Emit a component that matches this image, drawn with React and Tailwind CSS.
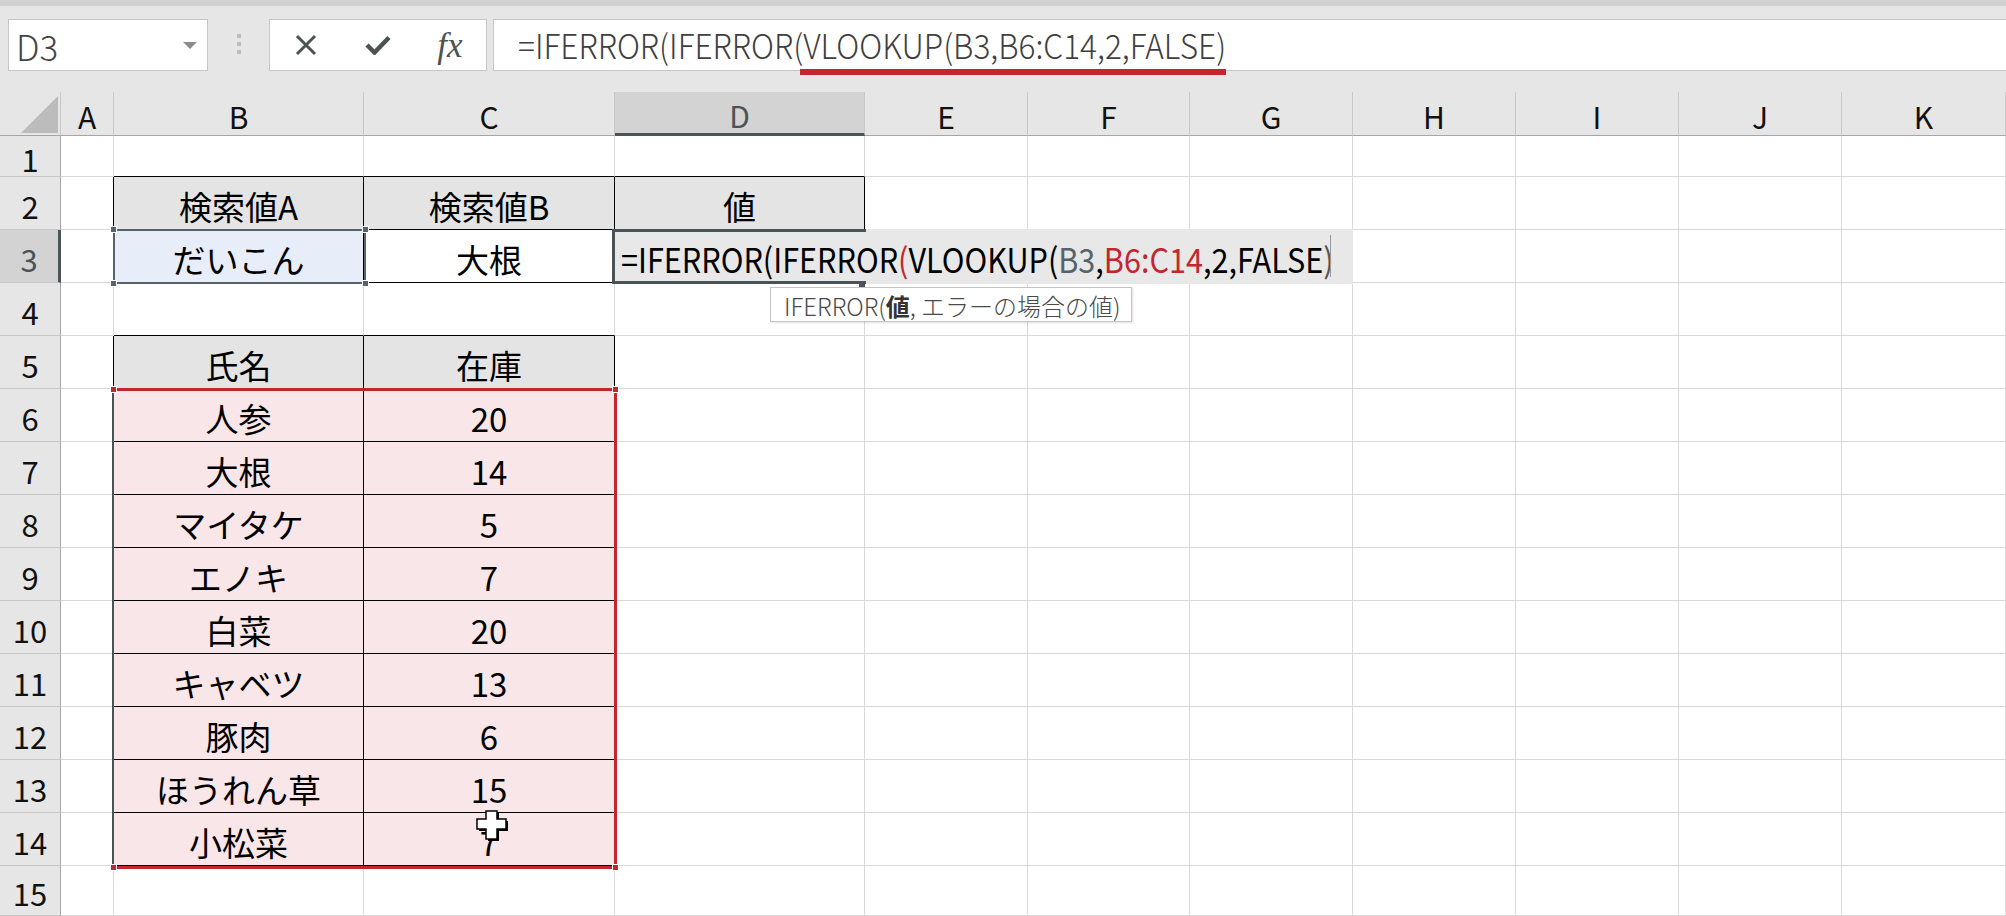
import React from "react";

const COLUMNS = ["A", "B", "C", "D", "E", "F", "G", "H", "I", "J", "K"];

// cell contents keyed by row, then column index (0 = A)
const CELLS = {
  2: { 1: "検索値A", 2: "検索値B", 3: "値" },
  3: { 1: "だいこん", 2: "大根" },
  5: { 1: "氏名", 2: "在庫" },
};
const STOCK = [
  ["人参", "20"],
  ["大根", "14"],
  ["マイタケ", "5"],
  ["エノキ", "7"],
  ["白菜", "20"],
  ["キャベツ", "13"],
  ["豚肉", "6"],
  ["ほうれん草", "15"],
  ["小松菜", "7"],
];
STOCK.forEach(([name, qty], i) => {
  CELLS[6 + i] = { 1: name, 2: qty };
});

const inStock = (r) => r >= 5 && r <= 14;

const rightBlack = (r, c) =>
  (c === 0 && (r === 2 || r === 3 || inStock(r))) ||
  (r === 2 && c >= 1 && c <= 3) ||
  (r === 3 && (c === 1 || c === 2)) ||
  (inStock(r) && (c === 1 || c === 2));

const bottomBlack = (r, c) =>
  ((r === 1 || r === 2) && c >= 1 && c <= 3) ||
  (r === 3 && (c === 1 || c === 2)) ||
  ((r === 4 || inStock(r)) && (c === 1 || c === 2));

const fill = (r, c) => {
  if ((r === 2 && c >= 1 && c <= 3) || (r === 5 && (c === 1 || c === 2))) return "bg-[#e4e4e4]";
  if (r === 3 && c === 1) return "bg-[#e8eef9]";
  if (r >= 6 && r <= 14 && (c === 1 || c === 2)) return "bg-[#f8e6e8]";
  return "bg-white";
};

const Handle = ({ className }) => (
  <div className={`absolute w-[7px] h-[7px] border border-white ${className}`} />
);

function FormulaBar() {
  return (
    <div className="h-[86px] bg-[#e6e6e6] flex items-start pt-[13px] pl-[8px]">
      <div className="w-[200px] h-[52px] bg-white border border-[#c6c6c6] flex items-center justify-between pl-[7px] pr-[10px]">
        <span className="text-[35px] font-light text-[#454545] leading-none">D3</span>
        <svg width="14" height="7" viewBox="0 0 14 7">
          <polygon points="0,0 14,0 7,7" fill="#8c8c8c" />
        </svg>
      </div>
      <div className="ml-[29px] mt-[15px] flex flex-col gap-[4px]">
        <div className="w-[4px] h-[4px] bg-[#bdbdbd]" />
        <div className="w-[4px] h-[4px] bg-[#bdbdbd]" />
        <div className="w-[4px] h-[4px] bg-[#bdbdbd]" />
      </div>
      <div className="ml-[28px] w-[218px] h-[52px] bg-white border border-[#c6c6c6] flex items-center pl-[16px] gap-[32px]">
        <div className="w-10 flex justify-center">
          <svg width="22" height="22" viewBox="0 0 22 22">
            <path d="M2 2 L20 20 M20 2 L2 20" stroke="#4b5353" strokeWidth="3" />
          </svg>
        </div>
        <div className="w-10 flex justify-center">
          <svg width="26" height="20" viewBox="0 0 26 20">
            <path d="M2 10 L9.5 17.5 L24 2.5" stroke="#4b5353" strokeWidth="4.5" fill="none" />
          </svg>
        </div>
        <div className="w-10 flex justify-center">
          <span className="font-['Liberation_Serif',serif] italic text-[35px] leading-none text-[#4b5353]">fx</span>
        </div>
      </div>
      <div className="relative ml-[6px] flex-1 h-[52px] bg-white border-y border-l border-[#c6c6c6] flex items-center pl-[24px]">
        <span className="inline-block origin-left scale-x-[0.93] text-[34px] font-light text-[#3f3f3f] leading-none whitespace-nowrap">
          =IFERROR(IFERROR(VLOOKUP(B3,B6:C14,2,FALSE)
        </span>
        <div className="absolute left-[306px] top-[49px] w-[426px] h-[6px] bg-[#c4262e]" />
      </div>
    </div>
  );
}

function Sheet() {
  const rows = [];
  for (let r = 1; r <= 15; r++) rows.push(r);

  return (
    <div className="relative grid grid-cols-[61px_53px_250px_251px_250px_163px_162px_163px_163px_163px_163px_164px] grid-rows-[44px_41px_repeat(13,53px)_50px]">
      {/* select-all corner */}
      <div className="relative bg-[#e6e6e6] border-r border-b border-r-[#c8c8c8] border-b-[#a6a6a6]">
        <svg className="absolute left-0 top-0" width="61" height="44" viewBox="0 0 61 44">
          <polygon points="58,4 58,41 21,41" fill="#bcbcbc" />
        </svg>
      </div>
      {COLUMNS.map((col) =>
        col === "D" ? (
          <div
            key={col}
            className="bg-[#d3d3d3] border-r border-b-[3px] border-r-[#c8c8c8] border-b-[#4a5458] flex items-center justify-center pt-[4px] text-[30px] leading-none text-[#4a5458]"
          >
            {col}
          </div>
        ) : (
          <div
            key={col}
            className="bg-[#e6e6e6] border-r border-b border-r-[#c8c8c8] border-b-[#a6a6a6] flex items-center justify-center pt-[4px] text-[30px] leading-none text-[#111]"
          >
            {col}
          </div>
        )
      )}

      {rows.map((r) => (
        <React.Fragment key={r}>
          {r === 3 ? (
            <div className="bg-[#d3d3d3] border-r-[3px] border-b border-r-[#4a5458] border-b-[#c8c8c8] flex items-center justify-center pt-[4px] text-[31px] leading-none text-[#4a5458]">
              {r}
            </div>
          ) : (
            <div className="bg-[#e6e6e6] border-r border-b border-r-[#a6a6a6] border-b-[#c8c8c8] flex items-center justify-center pt-[4px] text-[31px] leading-none text-[#111]">
              {r}
            </div>
          )}
          {COLUMNS.map((col, c) => (
            <div
              key={col}
              className={`border-r border-b ${rightBlack(r, c) ? "border-r-black" : "border-r-[#d9d9d9]"} ${
                bottomBlack(r, c) ? "border-b-black" : "border-b-[#d9d9d9]"
              } ${fill(r, c)} flex items-center justify-center pt-[6px] text-[33px] leading-none text-black whitespace-nowrap`}
            >
              {CELLS[r] && CELLS[r][c]}
            </div>
          ))}
        </React.Fragment>
      ))}

      {/* B3 reference outline */}
      <div className="absolute left-[113px] top-[137px] w-[253px] h-[55px] border-2 border-[#56636a]">
        <Handle className="-left-[5px] -top-[5px] bg-[#56636a]" />
        <Handle className="-right-[5px] -top-[5px] bg-[#56636a]" />
        <Handle className="-left-[5px] -bottom-[5px] bg-[#56636a]" />
        <Handle className="-right-[5px] -bottom-[5px] bg-[#56636a]" />
      </div>

      {/* B6:C14 reference outline */}
      <div className="absolute left-[112px] top-[296px] w-[505px] h-[481px] border-t-[3px] border-r-[3px] border-b-[3px] border-l-2 border-t-[#c4262e] border-r-[#c4262e] border-b-[#c4262e] border-l-[#4a5458]">
        <Handle className="-left-[4px] -top-[5px] bg-[#c4262e]" />
        <Handle className="-right-[5px] -top-[5px] bg-[#c4262e]" />
        <Handle className="-left-[4px] -bottom-[5px] bg-[#c4262e]" />
        <Handle className="-right-[5px] -bottom-[5px] bg-[#c4262e]" />
      </div>

      {/* in-cell editor on D3 */}
      <div className="absolute left-[612px] top-[137px] w-[741px] h-[55px] bg-[#e8e8e8] flex items-center pl-[9px] pt-[5px]">
        <span className="inline-block origin-left scale-x-[0.9] whitespace-nowrap text-[34px] leading-none text-black">
          =IFERROR(IFERROR<span className="text-[#c4262e]">(</span>VLOOKUP(
          <span className="text-[#56636a]">B3</span>,<span className="text-[#c4262e]">B6:C14</span>,2,FALSE
          <span className="text-[#555]">)</span>
        </span>
      </div>
      <div className="absolute left-[1330px] top-[143px] w-px h-[42px] bg-[#9a9a9a]" />
      <div className="absolute left-[612px] top-[137px] w-[254px] h-[55px] border-l-[3px] border-t-[3px] border-b-[3px] border-[#4a5458]" />
      <div className="absolute left-[859px] top-[189px] w-[6px] h-[6px] bg-[#4a5458]" />

      {/* argument tooltip */}
      <div className="absolute left-[770px] top-[195px] w-[362px] h-[35px] bg-white border border-[#c4c4c4] shadow-[1px_1px_2px_rgba(0,0,0,0.12)] flex items-center pl-[13px] pt-[2px] whitespace-nowrap text-[24px] leading-none font-light text-[#4a4a4a]">
        IFERROR(<span className="font-bold text-[#333]">値</span>, エラーの場合の値)
      </div>

      {/* mouse pointer */}
      <svg className="absolute left-[476px] top-[718px]" width="34" height="32" viewBox="0 0 34 32">
        <path d="M12 3 H23 V11 H32 V21 H23 V31 H12 V21 H3 V11 H12 Z" fill="#000" />
        <path d="M10 1 H21 V9 H30 V19 H21 V29 H10 V19 H1 V9 H10 Z" fill="#fff" stroke="#000" strokeWidth="1.5" />
      </svg>
    </div>
  );
}

export default function App() {
  return (
    <div className="w-[2006px] h-[916px] overflow-hidden bg-white font-['Noto_Sans_CJK_JP',sans-serif]">
      <div className="h-[6px] bg-[#d1d1d1]" />
      <FormulaBar />
      <Sheet />
    </div>
  );
}
